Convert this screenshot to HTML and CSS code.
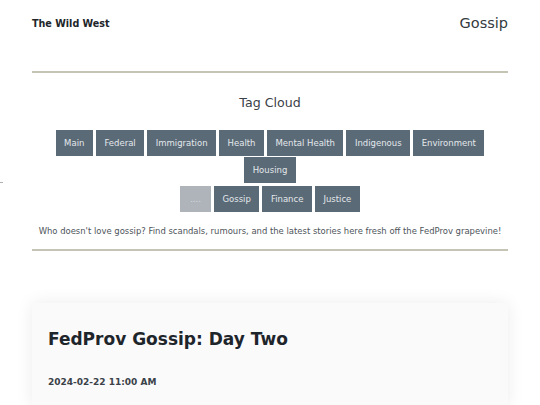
FILE: index.html
```html
<!DOCTYPE html>
<html>
<head>
<meta charset="utf-8">
<link rel="stylesheet" href="styles.css">
</head>
<body>
<span class="edge-mark"></span>
<div class="page">
  <header class="top">
    <div class="brand">The Wild West</div>
    <div class="section">Gossip</div>
  </header>
  <hr class="rule">
  <section class="cloud">
    <h2 class="cloud-title">Tag Cloud</h2>
    <div class="tags">
      <a class="tag">Main</a>
      <a class="tag">Federal</a>
      <a class="tag">Immigration</a>
      <a class="tag">Health</a>
      <a class="tag">Mental Health</a>
      <a class="tag">Indigenous</a>
      <a class="tag">Environment</a>
      <a class="tag">Housing</a>
    </div>
    <div class="tags tags-second">
      <a class="tag tag-disabled">....</a>
      <a class="tag">Gossip</a>
      <a class="tag">Finance</a>
      <a class="tag">Justice</a>
    </div>
    <p class="blurb">Who doesn't love gossip? Find scandals, rumours, and the latest stories here fresh off the FedProv grapevine!</p>
  </section>
  <hr class="rule rule-bottom">
  <article class="card">
    <h1 class="card-title">FedProv Gossip: Day Two</h1>
    <p class="card-date">2024-02-22 11:00 AM</p>
  </article>
</div>
</body>
</html>
```

FILE: styles.css
```css
html, body {
  margin: 0;
  padding: 0;
  background: #ffffff;
  font-family: "DejaVu Sans", sans-serif;
  color: #212529;
  overflow: hidden;
}

.edge-mark {
  position: absolute;
  left: 0;
  top: 182px;
  width: 3px;
  height: 1px;
  background: #b0b0b0;
}

.page {
  padding: 0 32px;
}

.top {
  display: flex;
  justify-content: space-between;
  align-items: center;
  height: 46px;
}

.brand {
  font-weight: bold;
  font-size: 9.6px;
  color: #212529;
}

.section {
  font-size: 14.5px;
  color: #343a40;
}

.rule {
  margin: 25px 0 0;
  border: 0;
  height: 2px;
  background: #c6c5b5;
}

.cloud {
  text-align: center;
}

.cloud-title {
  margin: 21px 0 0;
  font-size: 12.6px;
  font-weight: normal;
  color: #3a4148;
  line-height: 18px;
}

.tags {
  display: flex;
  flex-wrap: wrap;
  justify-content: center;
  gap: 1px 3px;
  margin: 18px 0 0;
}

.tags-second {
  margin-top: 3px;
}

.tag {
  display: inline-flex;
  align-items: center;
  height: 26px;
  padding: 0 8.5px;
  background: #5a6a77;
  color: #e4e8eb;
  font-size: 8.5px;
  text-decoration: none;
}

.tag-disabled {
  background: #aeb4ba;
  color: #d8dcdf;
  padding: 0 10px;
}

.blurb {
  margin: 13px 0 0;
  font-size: 8.45px;
  color: #4d545a;
  line-height: 12px;
}

.rule-bottom {
  margin-top: 12px;
}

.card {
  margin-top: 52px;
  background: #fafafa;
  box-shadow: 0 0 16px rgba(0, 0, 0, 0.08);
  padding: 24px 16px 20px;
}

.card-title {
  margin: 0;
  font-size: 17px;
  font-weight: bold;
  color: #1e252b;
  line-height: 24px;
}

.card-date {
  margin: 26px 0 0;
  font-size: 9px;
  font-weight: bold;
  color: #3b4249;
}
```
